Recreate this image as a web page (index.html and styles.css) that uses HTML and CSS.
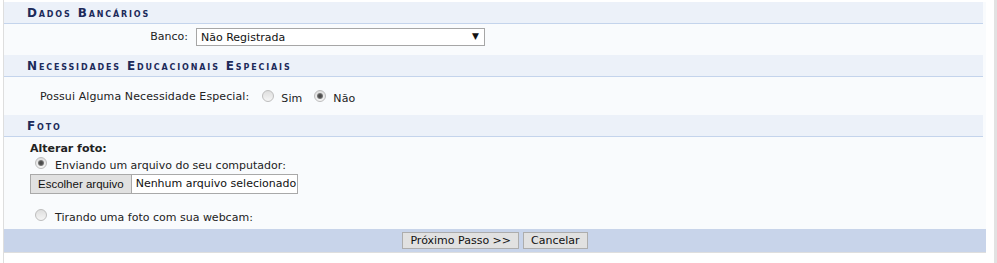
FILE: index.html
```html
<!DOCTYPE html>
<html lang="pt-BR">
<head>
  <meta charset="UTF-8">
  <title>Cadastro - Dados Pessoais</title>
  <link rel="stylesheet" href="styles.css">
</head>
<body>
  <div class="page">
    <div class="formulario">
      <div class="caption">Dados Bancários</div>
      <div class="row row-banco">
        <label class="rotulo" for="banco">Banco:</label>
        <div class="select-box">
          <select id="banco">
            <option>Não Registrada</option>
          </select>
          <span class="seta">&#9660;</span>
        </div>
      </div>

      <div class="caption">Necessidades Educacionais Especiais</div>
      <div class="row row-nee">
        <span class="rotulo-nee">Possui Alguma Necessidade Especial:</span>
        <label class="opcao"><input type="radio" name="nee"> <span>Sim</span></label>
        <label class="opcao"><input type="radio" name="nee" checked> <span>Não</span></label>
      </div>

      <div class="caption">Foto</div>
      <div class="foto">
        <div class="titulo-foto">Alterar foto:</div>
        <label class="opcao-foto"><input type="radio" name="foto" checked> <span>Enviando um arquivo do seu computador:</span></label>
        <div class="arquivo">
          <span class="btn-arquivo">Escolher arquivo</span>
          <span class="nome-arquivo">Nenhum arquivo selecionado</span>
        </div>
        <label class="opcao-foto webcam"><input type="radio" name="foto"> <span>Tirando uma foto com sua webcam:</span></label>
      </div>

      <div class="rodape">
        <button type="button" class="btn">Próximo Passo &gt;&gt;</button>
        <button type="button" class="btn">Cancelar</button>
      </div>
    </div>
  </div>
</body>
</html>
```

FILE: styles.css
```css
body {
  margin: 0;
  background: #fff;
  font-family: 'DejaVu Sans', Verdana, sans-serif;
  font-size: 11px;
  color: #222;
}
.page {
  margin-left: 3px;
  height: 263px;
  border-left: 1px solid #dedede;
  border-right: 3px solid #e2e2e2;
  box-sizing: border-box;
  width: 994px;
  padding-top: 2px;
}
.formulario {
  width: 982px;
  background: #f9fbfd;
}
.caption {
  margin-right: 3px;
  height: 21px;
  line-height: 22px;
  padding-left: 23px;
  background: #ecf1f9;
  border-bottom: 1px solid #c4d4ec;
  color: #1c2a5a;
  font-weight: bold;
  font-variant: small-caps;
  letter-spacing: 1.85px;
  font-size: 12px;
}
.row {
  display: flex;
  align-items: center;
}
.row-banco {
  height: 31px;
  align-items: flex-start;
  box-sizing: border-box;
  padding-top: 4px;
}
.rotulo {
  width: 184px;
  text-align: right;
  margin-right: 8px;
  line-height: 18px;
}
.select-box {
  position: relative;
  width: 289px;
  height: 18px;
}
.select-box select {
  appearance: none;
  -webkit-appearance: none;
  width: 100%;
  height: 18px;
  margin: 0;
  padding: 0 0 0 4px;
  border: 1px solid #a6a6a6;
  border-radius: 0;
  background: #fff;
  font-family: 'DejaVu Sans', Verdana, sans-serif;
  font-size: 11px;
  color: #111;
}
.seta {
  position: absolute;
  right: 6px;
  top: 3px;
  font-size: 9px;
  color: #111;
  pointer-events: none;
}
.row-nee {
  height: 38px;
  padding-left: 36px;
  letter-spacing: 0.1px;
}
.rotulo-nee {
  margin-right: 13px;
}
.opcao {
  display: flex;
  align-items: center;
  margin-right: 12px;
}
.opcao span {
  margin-top: 5px;
  margin-left: 7px;
}
input[type="radio"] {
  appearance: none;
  -webkit-appearance: none;
  width: 12px;
  height: 12px;
  margin: 0;
  border: 1px solid #bdbdbd;
  border-radius: 50%;
  background: linear-gradient(#dedede, #f5f5f5);
  box-sizing: border-box;
  position: relative;
}
input[type="radio"]:checked::after {
  content: "";
  position: absolute;
  left: 2px;
  top: 2px;
  width: 6px;
  height: 6px;
  border-radius: 50%;
  background: radial-gradient(circle, #4a4a4a 30%, #8a8a8a 75%);
}
.foto {
  padding: 5px 0 0 26px;
  height: 87px;
}
.titulo-foto {
  font-weight: bold;
  line-height: 13px;
  margin-bottom: 2px;
}
.opcao-foto {
  display: flex;
  align-items: flex-start;
  padding-left: 5px;
  line-height: 14px;
}
.opcao-foto input {
  margin-top: 0;
}
.opcao-foto span {
  margin-left: 8px;
  margin-top: 2px;
}
.arquivo {
  display: inline-flex;
  align-items: stretch;
  height: 20px;
  border: 1px solid #a9a9a9;
  box-sizing: border-box;
  background: #fff;
  margin-top: 1px;
}
.btn-arquivo {
  font-family: 'Liberation Sans', Arial, sans-serif;
  font-size: 11.5px;
  line-height: 18px;
  padding: 0 7px;
  background: #e1e1e1;
  border-right: 1px solid #a9a9a9;
  color: #111;
}
.nome-arquivo {
  line-height: 18px;
  padding: 0 1px 0 4px;
  color: #111;
}
.webcam {
  margin-top: 15px;
}
.rodape {
  height: 23px;
  background: #c8d4ea;
  border-bottom: 1px solid #dedede;
  display: flex;
  justify-content: center;
  align-items: center;
  gap: 4px;
}
.btn {
  font-family: 'DejaVu Sans', Verdana, sans-serif;
  font-size: 11px;
  height: 17px;
  padding: 0 7px;
  background: #e1e1e1;
  border: 1px solid #adadad;
  border-radius: 0;
  color: #111;
}
```
